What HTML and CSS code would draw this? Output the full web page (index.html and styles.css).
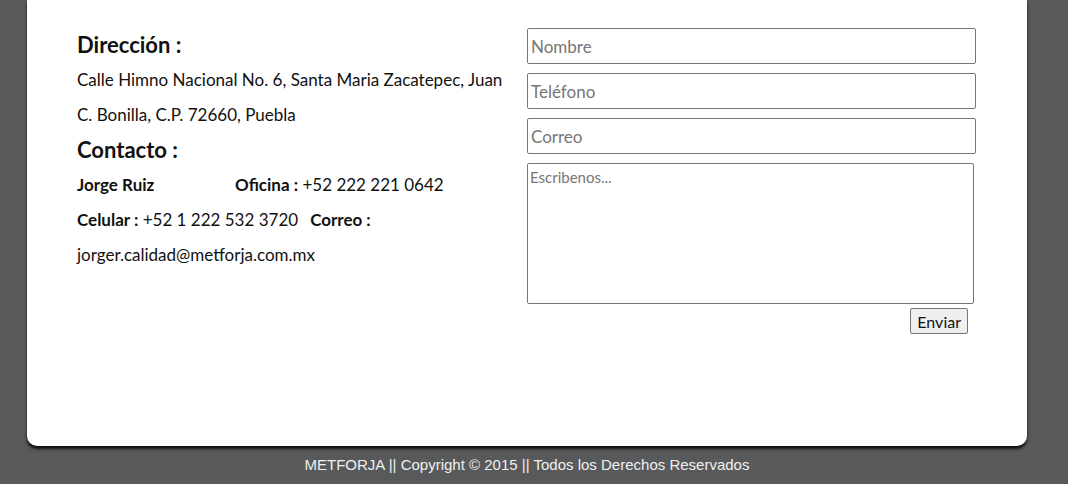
FILE: index.html
```html
<!DOCTYPE html>
<html lang="es">
<head>
<meta charset="utf-8">
<title>Contacto - METFORJA</title>
<link rel="stylesheet" href="styles.css">
</head>
<body>
<div class="wrap">
  <main class="card">
    <section class="info">
      <h2 class="title">Dirección :</h2>
      <p class="line">Calle Himno Nacional No. 6, Santa Maria Zacatepec, Juan C. Bonilla, C.P. 72660, Puebla</p>
      <h2 class="title">Contacto :</h2>
      <p class="line"><b class="name">Jorge Ruiz</b><b>Oficina :</b> +52 222 221 0642</p>
      <p class="line"><b>Celular :</b> +52 1 222 532 3720<span class="sep"></span><b>Correo :</b></p>
      <p class="line">jorger.calidad@metforja.com.mx</p>
    </section>
    <form class="form">
      <input class="field" type="text" placeholder="Nombre">
      <input class="field" type="text" placeholder="Teléfono">
      <input class="field" type="text" placeholder="Correo">
      <textarea class="msg" placeholder="Escribenos..."></textarea>
      <div class="actions"><button class="send" type="button">Enviar</button></div>
    </form>
  </main>
  <footer class="foot">METFORJA || Copyright © 2015 || Todos los Derechos Reservados</footer>
</div>
</body>
</html>
```
FILE: styles.css
```css
html, body {
  margin: 0;
  padding: 0;
  background: #58595b;
}
.wrap {
  width: 1000px;
  margin-left: 27px;
}
.card {
  background: #fff;
  border-radius: 0 0 10px 10px;
  box-shadow: 0 3px 3px rgba(0,0,0,0.85);
  display: flex;
  padding: 28px 50px 0 50px;
  height: 446px;
  box-sizing: border-box;
  font-family: "Lato", "Open Sans", sans-serif;
  color: #111;
}
.info {
  width: 432px;
  margin-right: 18px;
  margin-top: -1px;
}
.title {
  margin: 0;
  font-size: 22px;
  font-weight: 700;
  line-height: 35px;
}
.line {
  margin: 0;
  font-size: 17px;
  line-height: 35px;
}
.line b {
  font-weight: 700;
}
.name {
  display: inline-block;
  width: 158px;
}
.sep {
  display: inline-block;
  width: 12px;
}
.form {
  width: 450px;
  display: flex;
  flex-direction: column;
}
.field {
  width: 449px;
  height: 36px;
  box-sizing: border-box;
  margin: 0 0 9px 0;
  border: 1px solid #767676;
  border-radius: 2px;
  padding: 0 3px;
  font-family: "Lato", sans-serif;
  font-size: 17px;
}
.field::placeholder, .msg::placeholder {
  color: #767676;
}
.msg {
  width: 447px;
  height: 141px;
  box-sizing: border-box;
  margin: 0;
  border: 1px solid #767676;
  border-radius: 2px;
  padding: 4px 2px;
  font-family: "Lato", sans-serif;
  font-size: 15px;
  resize: none;
}
.actions {
  width: 441px;
  display: flex;
  justify-content: flex-end;
  margin-top: 4px;
}
.send {
  font-family: "Lato", sans-serif;
  font-size: 16px;
  height: 26px;
  padding: 0 6px;
  background: #efefef;
  border: 1px solid #767676;
  border-radius: 2px;
  color: #111;
}
.foot {
  text-align: center;
  color: #f0f0f0;
  font-family: "Liberation Sans", Arial, sans-serif;
  font-size: 15px;
  line-height: 20px;
  padding-top: 9px;
}
```
